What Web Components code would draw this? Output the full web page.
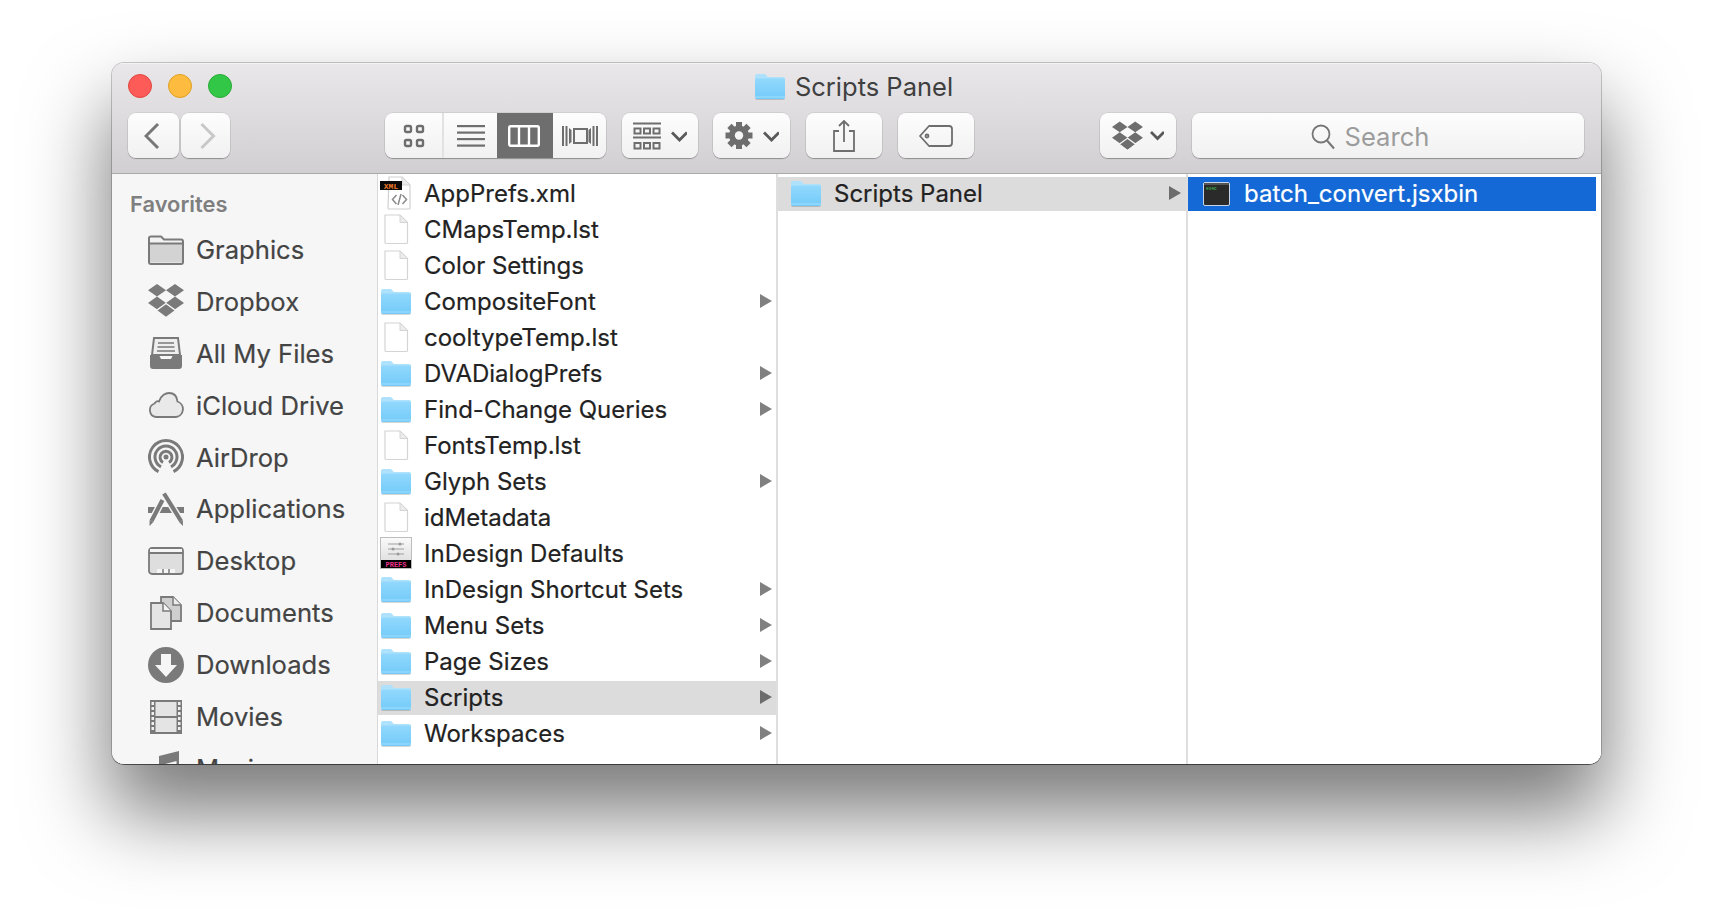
<!DOCTYPE html>
<html>
<head>
<meta charset="utf-8">
<title>Scripts Panel</title>
<style>
  html, body { margin: 0; background: #fff; }
  body { font-family: Inter, "Liberation Sans", sans-serif; overflow: hidden; height: 924px; }
</style>
</head>
<body>
<finder-window title="Scripts Panel">
  <tool-bar slot="toolbar">
    <tool-button w="51" icon="back"></tool-button>
    <tool-button w="49" icon="forward" style="margin-left:2px"></tool-button>
    <view-switch style="margin-left:155px"></view-switch>
    <tool-button w="76" icon="arrange" style="margin-left:16px"></tool-button>
    <tool-button w="77" icon="gear" style="margin-left:15px"></tool-button>
    <tool-button w="76" icon="share" style="margin-left:16px"></tool-button>
    <tool-button w="76" icon="tag" style="margin-left:16px"></tool-button>
    <tool-button w="76" icon="dropdrop" style="margin-left:126px"></tool-button>
    <search-box style="margin-left:16px"></search-box>
  </tool-bar>

  <side-bar slot="sidebar" heading="Favorites">
    <side-item icon="graphics">Graphics</side-item>
    <side-item icon="dropbox">Dropbox</side-item>
    <side-item icon="allfiles">All My Files</side-item>
    <side-item icon="icloud">iCloud Drive</side-item>
    <side-item icon="airdrop">AirDrop</side-item>
    <side-item icon="apps">Applications</side-item>
    <side-item icon="desktop">Desktop</side-item>
    <side-item icon="documents">Documents</side-item>
    <side-item icon="downloads">Downloads</side-item>
    <side-item icon="movies">Movies</side-item>
    <side-item icon="music">Music</side-item>
  </side-bar>

  <file-column slot="columns" w="400" pad="2" arrow="4">
    <file-row icon="xml">AppPrefs.xml</file-row>
    <file-row icon="doc">CMapsTemp.lst</file-row>
    <file-row icon="doc">Color Settings</file-row>
    <file-row icon="folder" more>CompositeFont</file-row>
    <file-row icon="doc">cooltypeTemp.lst</file-row>
    <file-row icon="folder" more>DVADialogPrefs</file-row>
    <file-row icon="folder" more>Find-Change Queries</file-row>
    <file-row icon="doc">FontsTemp.lst</file-row>
    <file-row icon="folder" more>Glyph Sets</file-row>
    <file-row icon="doc">idMetadata</file-row>
    <file-row icon="prefs">InDesign Defaults</file-row>
    <file-row icon="folder" more>InDesign Shortcut Sets</file-row>
    <file-row icon="folder" more>Menu Sets</file-row>
    <file-row icon="folder" more>Page Sizes</file-row>
    <file-row icon="folder" more state="open">Scripts</file-row>
    <file-row icon="folder" more>Workspaces</file-row>
  </file-column>
  <file-column slot="columns" w="410" pad="12" arrow="5">
    <file-row icon="folder" more state="open">Scripts Panel</file-row>
  </file-column>
  <file-column slot="columns" w="413" pad="12" arrow="5" last>
    <file-row icon="exec" state="selected">batch_convert.jsxbin</file-row>
  </file-column>
</finder-window>

<script>
const G = "#7a7a7a";
const SIDE_BG = "#f6f6f6";

const dropboxShape = (fill, cut) => `
  <path fill="${fill}" d="M9 0l9 6.300-9 6.300-9-6.300zM27 0l9 6.300-9 6.300-9-6.300zM9 12.600l9 6.300-9 6.300-9-6.300zM27 12.600l9 6.300-9 6.300-9-6.300z"/>
  <path fill="${fill}" stroke="${cut}" stroke-width="1.200" d="M18 19.500l9.500 7-9.500 7-9.500-7z"/>`;

const chevron = (x, y, w) => `<path d="M${x} ${y}l${w / 2} ${w / 2} ${w / 2} ${-w / 2}" fill="none" stroke="#595959" stroke-width="2.800"/>`;

const gearTeeth = [0, 45, 90, 135].map(a => `<rect x="11" y="1" width="6" height="27" transform="rotate(${a} 14 14.500)"/>`).join("");

// all the artwork in one place, the elements just look it up by name
const ICONS = {
  back: `<svg width="20" height="30" viewBox="2 0 20 30"><path d="M16 3 L4 15 L16 27" fill="none" stroke="#777" stroke-width="3"/></svg>`,
  forward: `<svg width="20" height="30" viewBox="-1.500 0 20 30"><path d="M4 3 L16 15 L4 27" fill="none" stroke="#c8c8c8" stroke-width="3"/></svg>`,
  viewIcons: `<svg width="22" height="24" viewBox="0 0 22 24" fill="none" stroke="#6e6e6e" stroke-width="2.400"><rect x="2" y="2" width="6" height="6" rx="1.500"/><rect x="14" y="2" width="6" height="6" rx="1.500"/><rect x="2" y="16" width="6" height="6" rx="1.500"/><rect x="14" y="16" width="6" height="6" rx="1.500"/></svg>`,
  viewList: `<svg width="28" height="22" viewBox="0 0 28 22" fill="#6e6e6e"><rect y="0" width="28" height="2.200"/><rect y="6.500" width="28" height="2.200"/><rect y="13" width="28" height="2.200"/><rect y="19.500" width="28" height="2.200"/></svg>`,
  viewColumns: `<svg width="32" height="22" viewBox="0 0 32 22" fill="none" stroke="#fff" stroke-width="2.400" style="margin-right:2px"><rect x="1.200" y="1.200" width="29.600" height="19.600" rx="1.500"/><path d="M11 1v20M21 1v20"/></svg>`,
  viewCover: `<svg width="36" height="20" viewBox="0 0 36 20" fill="#6e6e6e"><rect x="0" width="2" height="20"/><rect x="3.500" width="2" height="20"/><path d="M7 2l2.500 2v12l-2.500 2z"/><rect x="12" y="3" width="13" height="14" fill="none" stroke="#6e6e6e" stroke-width="2"/><path d="M29 2l-2.500 2v12l2.500 2z"/><rect x="30.500" width="2" height="20"/><rect x="34" width="2" height="20"/></svg>`,
  arrange: `<svg width="54" height="30" viewBox="0 0 54 30"><g fill="none" stroke="#6e6e6e" stroke-width="2"><rect x="1.500" y="7.500" width="6" height="5"/><rect x="11" y="7.500" width="6" height="5"/><rect x="20.500" y="7.500" width="6" height="5"/><rect x="1.500" y="22" width="6" height="5.500"/><rect x="11" y="22" width="6" height="5.500"/><rect x="20.500" y="22" width="6" height="5.500"/></g><g fill="#6e6e6e"><rect width="28" height="2" y="1.500"/><rect width="28" height="2" y="15.500"/></g>${chevron(39, 11.500, 15)}</svg>`,
  gear: `<svg width="54" height="30" viewBox="0 0 54 30"><g fill="#6e6e6e"><circle cx="14" cy="14.500" r="10"/>${gearTeeth}</g><circle cx="14" cy="14.500" r="4.200" fill="#f6f6f6"/>${chevron(39, 11.500, 15)}</svg>`,
  share: `<svg width="24" height="32" viewBox="0 0 24 32" fill="none" stroke="#6e6e6e" stroke-width="1.800"><path d="M7 11H2v20h20V11h-5"/><path d="M12 22V1M7 6l5-5 5 5"/></svg>`,
  tag: `<svg width="34" height="22" viewBox="0 0 34 22" fill="none" stroke="#6e6e6e" stroke-width="1.800"><path d="M10 1h20a3 3 0 0 1 3 3v14a3 3 0 0 1-3 3H10L1 11z" stroke-linejoin="round"/><circle cx="8" cy="11" r="1.500"/></svg>`,
  dropdrop: `<svg width="52" height="30" viewBox="0 0 52 30"><g transform="translate(0 .500) scale(.86)">${dropboxShape("#6e6e6e", "#f8f8f8")}</g>${chevron(39, 11, 13)}</svg>`,
  lens: `<svg width="24" height="26" viewBox="0 0 24 26" fill="none" stroke="#777" stroke-width="1.800"><circle cx="10" cy="10" r="8.500"/><path d="M16 16.500l7 8" stroke-width="2"/></svg>`,

  // sidebar, 36 wide
  graphics: `<svg width="36" height="30" viewBox="0 0 36 30"><path d="M1 4a2 2 0 0 1 2-2.500h10l3 3h17a2 2 0 0 1 2 2V27a2 2 0 0 1-2 2H3a2 2 0 0 1-2-2z" fill="#f2f2f2" stroke="${G}" stroke-width="2"/><path d="M2 9h32v18.500H2z" fill="#d3d3d3"/><path d="M1 8.500h34" stroke="${G}" stroke-width="1.800"/></svg>`,
  dropbox: `<svg width="36" height="34" viewBox="0 0 36 34">${dropboxShape(G, SIDE_BG)}</svg>`,
  allfiles: `<svg width="32" height="32" viewBox="0 0 32 32"><path d="M4 1h24l2 17H2z" fill="#eee" stroke="${G}" stroke-width="2"/><path d="M8 6h16M7.500 10h17M7 14h18M6.500 18h19" stroke="${G}" stroke-width="1.600"/><path d="M0 18h9l2 4h10l2-4h9v11a3 3 0 0 1-3 3H3a3 3 0 0 1-3-3z" fill="${G}"/></svg>`,
  icloud: `<svg width="36" height="26" viewBox="0 0 36 26"><path d="M8 25a7 7 0 0 1-1.500-13.500C8 9 10 9 11 9.500 13 3 18 1 21 1c5 0 8 3.500 8.500 8.500A8 8 0 0 1 28 25z" fill="#e9e9e9" stroke="${G}" stroke-width="1.800"/></svg>`,
  airdrop: `<svg width="36" height="36" viewBox="0 0 36 36" fill="none" stroke="${G}" stroke-width="3"><path d="M10.500 32.700A16.500 16.500 0 1 1 25.500 32.700"/><path d="M13 27.800A11 11 0 1 1 23 27.800"/><path d="M15 23.500A6 6 0 1 1 21 23.500"/><circle cx="18" cy="18" r="2.500" fill="${G}" stroke="none"/></svg>`,
  apps: `<svg width="36" height="34" viewBox="0 0 36 34" fill="none"><rect x="0" y="15" width="36" height="6" fill="${G}"/><g stroke="${SIDE_BG}" stroke-width="7"><path d="M14.500 8L3.500 29"/><path d="M16 1.500L33 29"/></g><g stroke="${G}" stroke-width="4.200"><path d="M14.500 8L3.500 29"/><path d="M16 1.500L33 29"/></g><path d="M1.600 28l3.800 2L1.500 34zM31 30l3.800-2L35 34z" fill="${G}"/></svg>`,
  desktop: `<svg width="36" height="28" viewBox="0 0 36 28"><rect x="1" y="1" width="34" height="26" rx="3" fill="#dedede" stroke="${G}" stroke-width="1.800"/><path d="M1 6h34" stroke="${G}" stroke-width="2"/><rect x="2" y="2" width="32" height="3" fill="#f6f6f6"/><rect x="9" y="22" width="18" height="4" fill="#f5f5f5"/><path d="M15 22v4M21 22v4" stroke="${G}" stroke-width="1.500"/></svg>`,
  documents: `<svg width="32" height="34" viewBox="0 0 32 34"><path d="M11 1h12l8 8v16H11z" fill="#cfcfcf" stroke="${G}" stroke-width="1.800"/><path d="M23 1v8h8" fill="#eee" stroke="${G}" stroke-width="1.500"/><path d="M1 7h12l8 8v18H1z" fill="#e4e4e4" stroke="${G}" stroke-width="1.800"/><path d="M13 7v8h8" fill="#f4f4f4" stroke="${G}" stroke-width="1.500"/></svg>`,
  downloads: `<svg width="36" height="36" viewBox="0 0 36 36"><circle cx="18" cy="18" r="18" fill="${G}"/><path d="M13 7h10v11h6L18 30 7 18h6z" fill="#f6f6f6"/></svg>`,
  movies: `<svg width="32" height="34" viewBox="0 0 32 34"><rect width="32" height="34" fill="${G}"/><rect x="5.500" y="2" width="21" height="14" fill="#e4e4e4"/><rect x="5.500" y="18" width="21" height="14" fill="#e4e4e4"/><g fill="#efefef"><rect x="1.500" y="2" width="2.500" height="3"/><rect x="1.500" y="7" width="2.500" height="3"/><rect x="1.500" y="12" width="2.500" height="3"/><rect x="1.500" y="17" width="2.500" height="3"/><rect x="1.500" y="22" width="2.500" height="3"/><rect x="1.500" y="27" width="2.500" height="3"/><rect x="28" y="2" width="2.500" height="3"/><rect x="28" y="7" width="2.500" height="3"/><rect x="28" y="12" width="2.500" height="3"/><rect x="28" y="17" width="2.500" height="3"/><rect x="28" y="22" width="2.500" height="3"/><rect x="28" y="27" width="2.500" height="3"/></g></svg>`,
  music: `<svg width="32" height="34" viewBox="0 0 32 34"><path d="M9 5L29 0v26h-2.500V10L11.500 14v16H9z" fill="${G}"/></svg>`,

  // column rows, 32x36 with the row centre at y=18
  folder: `<svg width="32" height="36" viewBox="0 0 32 36"><defs><linearGradient id="f" x1="0" y1="0" x2="0" y2="1"><stop offset="0" stop-color="#92d8fc"/><stop offset="1" stop-color="#73cbfa"/></linearGradient></defs><path d="M1 7a2 2 0 0 1 2-2h8l3 3h15a2 2 0 0 1 2 2v18a2 2 0 0 1-2 2H3a2 2 0 0 1-2-2z" fill="#000" opacity=".16" transform="translate(0 1)"/><path d="M1 7a2 2 0 0 1 2-2h8l3 3h15a2 2 0 0 1 2 2v18a2 2 0 0 1-2 2H3a2 2 0 0 1-2-2z" fill="#aee2fc"/><path d="M1 11a1.500 1.500 0 0 1 1.500-1.500h27a1.500 1.500 0 0 1 1.500 1.500v17a2 2 0 0 1-2 2H3a2 2 0 0 1-2-2z" fill="url(#f)"/><path d="M1 28h30" stroke="#a3dffc" stroke-width="1"/></svg>`,
  doc: `<svg width="32" height="36" viewBox="0 0 32 36"><path d="M5 3h15l7.500 7.500v20a1 1 0 0 1-1 1H6a1 1 0 0 1-1-1z" fill="#fff" stroke="#d4d4d4" stroke-width="1.200"/><path d="M20 3v7.500h7.500z" fill="#ececec" stroke="#d4d4d4" stroke-width="1"/></svg>`,
  xml: `<svg width="32" height="36" viewBox="0 0 32 36"><path d="M9 1h13l8 8v23a1 1 0 0 1-1 1H9a1 1 0 0 1-1-1z" fill="#fff" stroke="#d0d0d0" stroke-width="1.200"/><path d="M22 1v8h8z" fill="#ececec" stroke="#d4d4d4"/><rect x="0" y="5" width="22" height="9" fill="#0a0a0a"/><text x="11" y="12.500" text-anchor="middle" font-family="'Liberation Mono',monospace" font-weight="700" font-size="8" fill="#f07828">XML</text><path d="M16.500 19l-4 4.500 4 4.500M22.500 19l4 4.500-4 4.500M21 18l-3 11" fill="none" stroke="#8a8a8a" stroke-width="1.500"/></svg>`,
  prefs: `<svg width="32" height="36" viewBox="0 0 32 36"><defs><linearGradient id="p" x1="0" y1="0" x2="0" y2="1"><stop offset="0" stop-color="#fafafa"/><stop offset="1" stop-color="#d8d8d8"/></linearGradient></defs><rect x=".5" y="1.500" width="31" height="31" fill="url(#p)" stroke="#bdbdbd"/><rect x="1" y="24" width="30" height="8" fill="#000"/><text x="16" y="31" text-anchor="middle" font-family="'Liberation Mono',monospace" font-weight="700" font-size="7" fill="#e8308a">PREFS</text><path d="M8 8h16M8 13h16M8 18h16" stroke="#a0a0a0" stroke-width="1"/><circle cx="20" cy="8" r="1.500" fill="#999"/><circle cx="13" cy="13" r="1.500" fill="#999"/><circle cx="18" cy="18" r="1.500" fill="#999"/></svg>`,
  exec: `<svg width="32" height="36" viewBox="0 0 32 36"><rect x="3.500" y="6.500" width="26" height="23" rx="1.500" fill="#2a2a2a" stroke="#c9d6ea"/><rect x="4" y="7" width="25" height="2" fill="#555"/><text x="6" y="13.500" font-family="'Liberation Mono',monospace" font-size="4.500" fill="#3fd05a">exec</text></svg>`
};

class FinderWindow extends HTMLElement {
  constructor() {
    super();
    this.attachShadow({ mode: "open" });
  }
  connectedCallback() {
    const title = this.getAttribute("title") || "";
    this.shadowRoot.innerHTML = `
      <style>
        :host { display: block; padding: 63px 111px 0 112px; }
        .win {
          height: 701px;
          box-sizing: border-box;
          display: flex;
          flex-direction: column;
          border-radius: 12px;
          overflow: hidden;
          background: #fff;
          box-shadow: 0 0 0 1px rgba(0,0,0,.2), 0 1px 0 rgba(0,0,0,.45), 0 46px 80px 4px rgba(0,0,0,.52);
        }
        .head {
          height: 110px;
          flex: none;
          display: flex;
          flex-direction: column;
          background: linear-gradient(#e9e7e9, #d1cfd1);
          border-bottom: 1px solid #aaa;
          box-shadow: inset 0 1px 0 #f4f3f4;
        }
        .titlebar {
          height: 50px;
          flex: none;
          display: flex;
          align-items: center;
          justify-content: center;
          position: relative;
          font-size: 25.500px;
          color: #3f3f3f;
          gap: 9px;
          padding: 0 6px 3px 0;
          box-sizing: border-box;
        }
        .title-icon { height: 36px; }
        .lights { position: absolute; left: 16px; top: 11px; display: flex; gap: 16px; }
        .lights i { width: 24px; height: 24px; border-radius: 50%; box-sizing: border-box; }
        .r { background: #fc5b57; border: 1px solid #e2463f; }
        .y { background: #fdbb3f; border: 1px solid #dfa023; }
        .g { background: #33c748; border: 1px solid #27aa35; }
        .body { flex: 1; display: flex; min-height: 0; }
        .cols { flex: 1; display: flex; min-width: 0; }
      </style>
      <div class="win">
        <div class="head">
          <div class="titlebar">
            <div class="lights"><i class="r"></i><i class="y"></i><i class="g"></i></div>
            <span class="title-icon">${ICONS.folder}</span><span>${title}</span>
          </div>
          <slot name="toolbar"></slot>
        </div>
        <div class="body">
          <slot name="sidebar"></slot>
          <div class="cols"><slot name="columns"></slot></div>
        </div>
      </div>`;
  }
}

class ToolBar extends HTMLElement {
  constructor() {
    super();
    this.attachShadow({ mode: "open" }).innerHTML = `
      <style>:host { display: flex; padding-left: 16px; height: 45px; }</style>
      <slot></slot>`;
  }
}

const buttonSkin = `
  background: linear-gradient(#fdfdfd, #f1f1f1);
  border-radius: 8px;
  box-shadow: 0 0 0 .5px rgba(0,0,0,.12), 0 1px 1px rgba(0,0,0,.28);
`;

class ToolButton extends HTMLElement {
  constructor() {
    super();
    this.attachShadow({ mode: "open" });
  }
  connectedCallback() {
    const w = this.getAttribute("w") || 76;
    this.shadowRoot.innerHTML = `
      <style>
        :host {
          display: flex; flex: none; height: 45px; width: ${w}px;
          align-items: center; justify-content: center;
          ${buttonSkin}
        }
        svg { display: block; }
      </style>
      ${ICONS[this.getAttribute("icon")]}`;
  }
}

class ViewSwitch extends HTMLElement {
  constructor() {
    super();
    this.attachShadow({ mode: "open" }).innerHTML = `
      <style>
        :host { display: flex; flex: none; height: 45px; width: 221px; overflow: hidden; ${buttonSkin} }
        div { display: flex; align-items: center; justify-content: center; }
        .a { width: 57px; border-right: 2px solid #e2e2e2; }
        .b { width: 53px; }
        .c { width: 56px; background: #6e6e6e; }
        .d { width: 53px; }
      </style>
      <div class="a">${ICONS.viewIcons}</div>
      <div class="b">${ICONS.viewList}</div>
      <div class="c">${ICONS.viewColumns}</div>
      <div class="d">${ICONS.viewCover}</div>`;
  }
}

class SearchBox extends HTMLElement {
  constructor() {
    super();
    this.attachShadow({ mode: "open" }).innerHTML = `
      <style>
        :host {
          display: flex; flex: none; width: 392px; height: 45px;
          box-sizing: border-box; padding: 2px 36px 0 0;
          align-items: center; justify-content: center; gap: 10px;
          color: #9c9c9c; font-size: 25.600px;
          ${buttonSkin}
        }
        svg { display: block; }
      </style>
      ${ICONS.lens}<span>Search</span>`;
  }
}

class SideBar extends HTMLElement {
  constructor() {
    super();
    this.attachShadow({ mode: "open" });
  }
  connectedCallback() {
    this.shadowRoot.innerHTML = `
      <style>
        :host {
          display: block; flex: none; width: 265px; height: 100%;
          background: ${SIDE_BG}; border-right: 1px solid #d8d8d8;
          overflow: hidden;
        }
        h2 {
          margin: 0; padding: 17px 0 0 18px; height: 32.600px;
          font-size: 21.900px; font-weight: 600; line-height: 27px;
          color: #7f7f7f;
        }
      </style>
      <h2>${this.getAttribute("heading")}</h2>
      <slot></slot>`;
  }
}

class SideItem extends HTMLElement {
  constructor() {
    super();
    this.attachShadow({ mode: "open" });
  }
  connectedCallback() {
    this.shadowRoot.innerHTML = `
      <style>
        :host {
          display: flex; align-items: center; height: 51.900px;
          padding-left: 36px; font-size: 25.600px; color: #444;
          -webkit-text-stroke: .2px #444;
        }
        .ico { width: 36px; margin-right: 12px; display: flex; justify-content: center; }
        svg { display: block; }
      </style>
      <span class="ico">${ICONS[this.getAttribute("icon")]}</span><slot></slot>`;
  }
}

class FileColumn extends HTMLElement {
  constructor() {
    super();
    this.attachShadow({ mode: "open" });
  }
  connectedCallback() {
    const last = this.hasAttribute("last");
    const w = this.getAttribute("w");
    this.style.setProperty("--pad", this.getAttribute("pad") + "px");
    this.style.setProperty("--arrow", this.getAttribute("arrow") + "px");
    this.shadowRoot.innerHTML = `
      <style>
        :host {
          display: flex; flex-direction: column; gap: 2px;
          flex: none; width: ${w}px; box-sizing: border-box;
          padding-top: 3px; background: #fff;
          border-right: ${last ? "5px solid #fff" : "2px solid #dedede"};
          overflow: hidden;
        }
      </style>
      <slot></slot>`;
  }
}

class FileRow extends HTMLElement {
  constructor() {
    super();
    this.attachShadow({ mode: "open" });
  }
  connectedCallback() {
    const state = this.getAttribute("state") || "";
    const bg = state == "open" ? "#dcdcdc" : state == "selected" ? "#1569d6" : "transparent";
    const fg = state == "selected" ? "#fff" : "#222";
    this.shadowRoot.innerHTML = `
      <style>
        :host {
          display: flex; align-items: center; flex: none; height: 34px;
          padding-left: var(--pad); padding-right: var(--arrow);
          background: ${bg}; color: ${fg};
          font-size: 24px;
          -webkit-text-stroke: .2px ${fg};
        }
        .ico { width: 32px; height: 36px; margin-right: 12px; flex: none; }
        .ico svg { display: block; overflow: visible; }
        .label { flex: 1; white-space: nowrap; padding-bottom: 2px; }
        .more {
          width: 0; height: 0; margin-bottom: 2px;
          border-left: 12px solid ${state == "open" ? "#6c6c6c" : "#808080"};
          border-top: 7px solid transparent; border-bottom: 7px solid transparent;
        }
      </style>
      <span class="ico">${ICONS[this.getAttribute("icon")]}</span>
      <span class="label"><slot></slot></span>
      ${this.hasAttribute("more") ? '<span class="more"></span>' : ""}`;
  }
}

customElements.define("finder-window", FinderWindow);
customElements.define("tool-bar", ToolBar);
customElements.define("tool-button", ToolButton);
customElements.define("view-switch", ViewSwitch);
customElements.define("search-box", SearchBox);
customElements.define("side-bar", SideBar);
customElements.define("side-item", SideItem);
customElements.define("file-column", FileColumn);
customElements.define("file-row", FileRow);
</script>
</body>
</html>
